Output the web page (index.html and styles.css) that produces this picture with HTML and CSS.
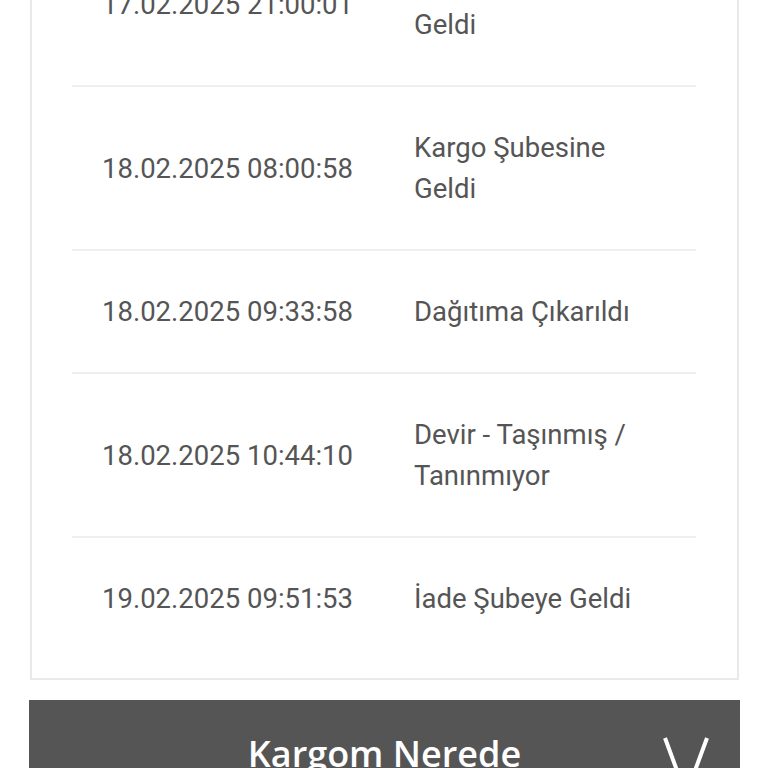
FILE: index.html
```html
<!DOCTYPE html>
<html lang="tr">
  <head>
    <meta charset="UTF-8" />
    <title>Kargo Takip</title>
    <link rel="stylesheet" href="styles.css">
  </head>
  <body>
    <div class="page">
      <div class="history">
        <table class="moves">
          <tr>
            <td class="date">17.02.2025 21:00:01</td>
            <td class="status">Transfer Merkezine Geldi</td>
          </tr>
          <tr>
            <td class="date">18.02.2025 08:00:58</td>
            <td class="status">Kargo Şubesine Geldi</td>
          </tr>
          <tr>
            <td class="date">18.02.2025 09:33:58</td>
            <td class="status">Dağıtıma Çıkarıldı</td>
          </tr>
          <tr>
            <td class="date">18.02.2025 10:44:10</td>
            <td class="status">Devir - Taşınmış / Tanınmıyor</td>
          </tr>
          <tr>
            <td class="date">19.02.2025 09:51:53</td>
            <td class="status">İade Şubeye Geldi</td>
          </tr>
        </table>
      </div>
      <div class="where-bar">
        <span class="where-title">Kargom Nerede</span>
        <svg class="where-toggle" width="46" height="60" viewBox="0 0 46 60">
          <polyline points="2,1 23,58 44,1" fill="none" stroke="#fff" stroke-width="4" />
        </svg>
      </div>
    </div>
  </body>
</html>
```

FILE: styles.css
```css
body {
  margin: 0;
  padding: 0;
  background-color: #fff;
  font-family: Roboto, "Noto Sans", sans-serif;
  overflow: hidden;
}

.page {
  margin-top: -77px;
  padding: 0 28px 0 29px;
}

.history {
  margin-left: 1px;
  margin-right: 1px;
  border: 2px solid #e9e9e9;
  border-top: none;
  padding: 0 41px 19px 40px;
}

.moves {
  width: 100%;
  border-collapse: collapse;
  table-layout: fixed;
}

.moves tr + tr td {
  border-top: 2px solid #efefef;
}

.moves td {
  padding: 40px 30px;
  font-size: 27.5px;
  line-height: 41px;
  color: #555;
  vertical-align: middle;
}

.where-bar {
  position: relative;
  margin-top: 20px;
  height: 110px;
  background-color: #555;
  text-align: center;
  padding-top: 30px;
  box-sizing: border-box;
}

.where-title {
  font-family: "Open Sans", sans-serif;
  font-weight: 600;
  font-size: 36px;
  line-height: 48px;
  color: #fff;
}

.where-toggle {
  position: absolute;
  right: 31px;
  top: 37px;
}
```
